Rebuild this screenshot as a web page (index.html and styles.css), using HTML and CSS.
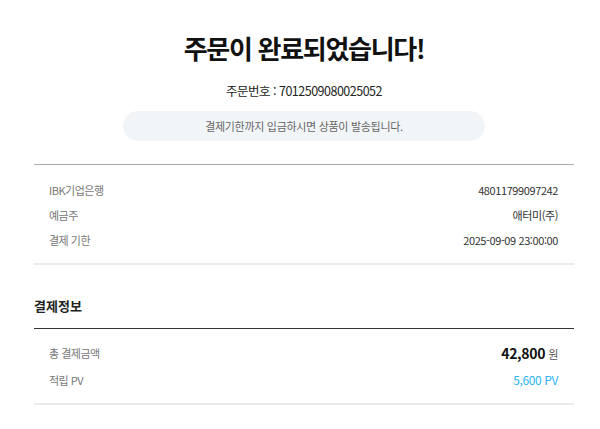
FILE: index.html
```html
<!DOCTYPE html>
<html lang="ko">
<head>
<meta charset="utf-8">
<link rel="stylesheet" href="styles.css">
</head>
<body>
<main class="page">
  <h1 class="title">주문이 완료되었습니다!</h1>
  <p class="order-no">주문번호 : 7012509080025052</p>
  <div class="notice">결제기한까지 입금하시면 상품이 발송됩니다.</div>

  <section class="box bank">
    <div class="row"><span class="label">IBK기업은행</span><span class="value">48011799097242</span></div>
    <div class="row"><span class="label">예금주</span><span class="value">애터미(주)</span></div>
    <div class="row"><span class="label">결제 기한</span><span class="value">2025-09-09 23:00:00</span></div>
  </section>

  <h2 class="section-title">결제정보</h2>
  <section class="box pay">
    <div class="row"><span class="label">총 결제금액</span><span class="value"><strong class="amount">42,800</strong><span class="unit">원</span></span></div>
    <div class="row"><span class="label">적립 PV</span><span class="value pv">5,600 PV</span></div>
  </section>
</main>
</body>
</html>
```

FILE: styles.css
```css
* { box-sizing: border-box; }
html, body { margin: 0; padding: 0; background: #fff; }
body {
  font-family: "Noto Sans CJK KR", "Noto Sans", sans-serif;
  color: #222;
}
.page {
  width: 540px;
  margin-left: 34px;
  padding-top: 26px;
  display: flex;
  flex-direction: column;
  align-items: center;
}
.title {
  margin: 0;
  font-size: 26px;
  line-height: 44px;
  font-weight: 700;
  letter-spacing: -1.3px;
  color: #111;
}
.order-no {
  margin: 12px 0 0;
  font-size: 12.5px;
  line-height: 18px;
  color: #222;
  letter-spacing: -0.5px;
}
.notice {
  margin-top: 11px;
  width: 362px;
  height: 30px;
  border-radius: 15px;
  background: #f2f5f8;
  color: #666;
  font-size: 11px;
  display: flex;
  align-items: center;
  justify-content: center;
  letter-spacing: -0.3px;
}
.box {
  align-self: stretch;
  padding: 12px 16px 11px 15px;
  border-bottom: 2px solid #ebebeb;
  display: flex;
  flex-direction: column;
}
.bank {
  margin-top: 23px;
  border-top: 1px solid #aaa;
}
.row {
  display: flex;
  justify-content: space-between;
  align-items: center;
  height: 25px;
  font-size: 11px;
}
.label { color: #777; letter-spacing: -0.5px; }
.value { color: #333; letter-spacing: -0.4px; }
.section-title {
  align-self: stretch;
  margin: 31px 0 0;
  font-size: 13px;
  line-height: 20px;
  font-weight: 700;
  color: #222;
  padding-bottom: 12px;
  border-bottom: 1.5px solid #333;
}
.pay { padding-top: 10px; padding-bottom: 10px; }
.pay .row { height: 27px; }
.amount { font-size: 14px; font-weight: 700; color: #111; letter-spacing: -0.3px; }
.unit { font-size: 11px; color: #555; margin-left: 3px; }
.pv { color: #2bb5f0; font-size: 12px; }
```
